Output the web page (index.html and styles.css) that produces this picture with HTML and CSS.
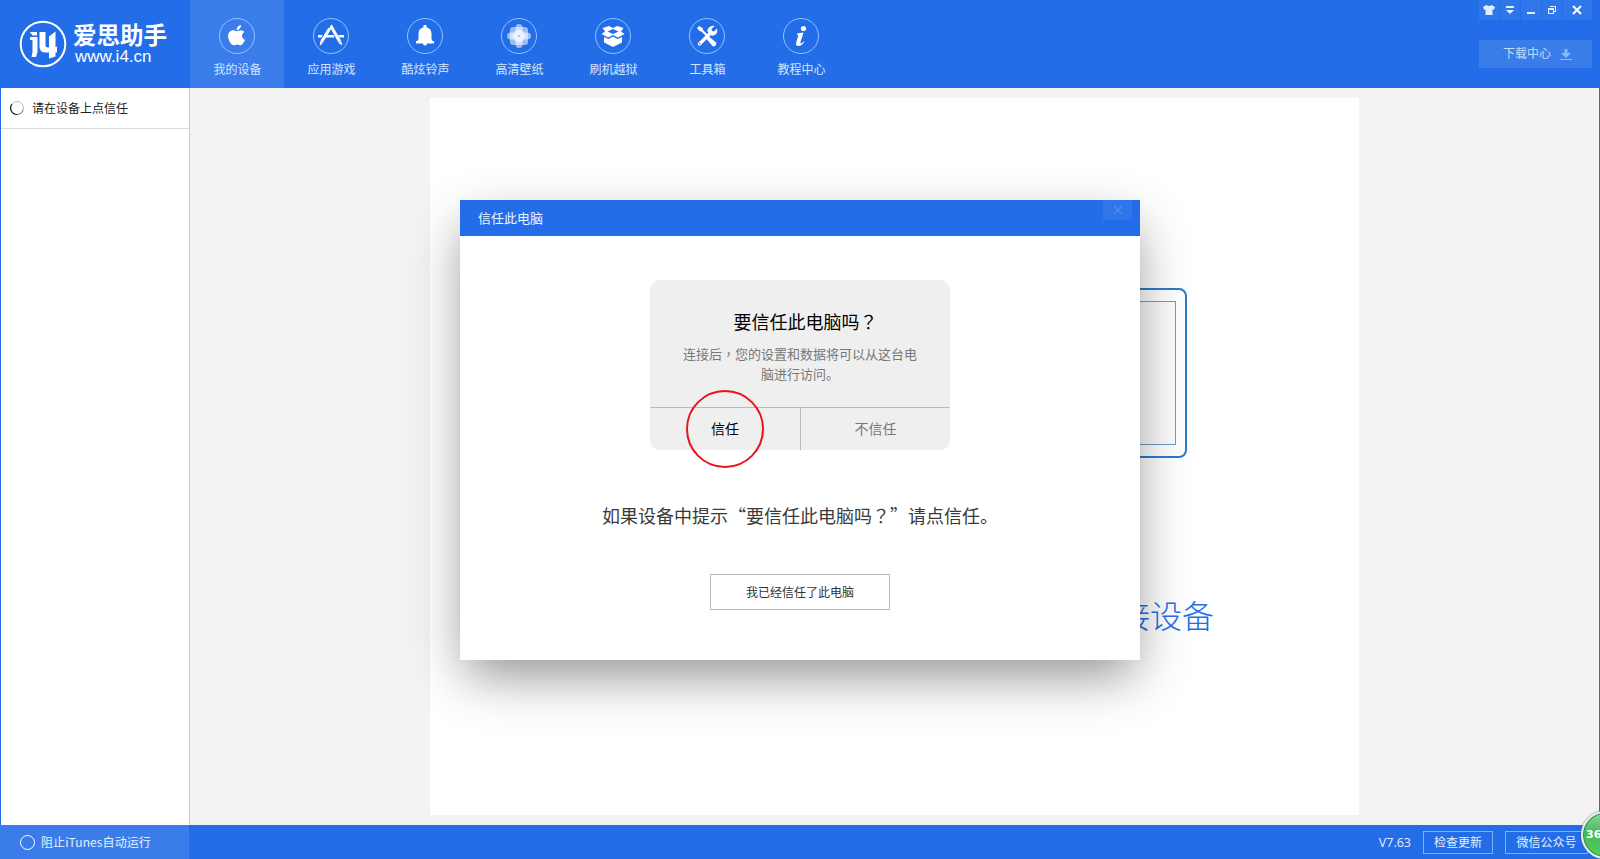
FILE: index.html
```html
<!DOCTYPE html>
<html lang="zh-CN">
<head>
  <meta charset="UTF-8" />
  <meta name="viewport" content="width=device-width, initial-scale=1.0"/>
  <title>爱思助手</title>
  <link rel="stylesheet" href="styles.css">
</head>
<body>

  <!-- Top bar -->
  <header class="header">
    <div class="logo">
      <svg width="48" height="48" viewBox="0 0 48 48" fill="#fff">
        <circle cx="24" cy="24" r="22.3" fill="none" stroke="#fff" stroke-width="2"/>
        <path d="M11 12h7v3.500h-4.500zM11 17h7.500v15l-1.500 5h-4.500l1-4.500V20H11z"/>
        <path d="M20.500 12h6v13.500q0 2 2.500 2h1v-11l6.500-5v15.500l1.500-.5v6h-1.500v4l-6.500 2v-6h-3.500q-6 0-6-6z"/>
      </svg>
      <div class="logo-text">
        <div class="logo-name">爱思助手</div>
        <div class="logo-url">www.i4.cn</div>
      </div>
    </div>

    <nav class="nav">
      <div class="nav-item active">
        <svg class="nav-icon" viewBox="0 0 36 36">
          <circle class="ring" cx="18" cy="18" r="17.500"/>
          <path d="M22 7q.2 2-1.200 3.500T17.700 12q-.2-2 1.200-3.500T22 7zM18 13.200c1-.1 2-1 3.800-1 1.500 0 2.700.7 3.500 1.800-3.500 2.200-2.700 6.500.7 7.800-.8 2.300-2.500 5.400-4.300 5.400-1.300 0-1.900-.8-3.500-.8s-2.300.8-3.500.8c-2.500 0-5.600-5-5.600-9 0-3.700 2.300-5.900 5-5.900 1.700 0 3 .9 3.900.9z"/>
        </svg>
        <span>我的设备</span>
      </div>
      <div class="nav-item">
        <svg class="nav-icon" viewBox="0 0 36 36">
          <circle class="ring" cx="18" cy="18" r="17.500"/>
          <path d="M5 17h4.500l-1 2.500H5zM12.500 17h8l1 2.500H11.500zM25 17h6v2.500h-4.700z"/>
          <path class="line" d="M16.600 10.500L8.500 24M18.200 8.500l8.500 15" stroke-width="3"/>
          <path d="M7 23.500l2.800 1.600-2.900 2.600zM25.200 24.700l3-1.800 1.200 4.600z"/>
          <path d="M19 7l-4.500 7.500" class="line" stroke-width="1.500"/>
        </svg>
        <span>应用游戏</span>
      </div>
      <div class="nav-item">
        <svg class="nav-icon" viewBox="0 0 36 36">
          <circle class="ring" cx="18" cy="18" r="17.500"/>
          <path d="M16.500 7h3v2.200q5 1.300 5 6.800v5l1 2h1.500v2.500H20a2 2 0 0 1-4 0H9V23h1.500l1-2v-5q0-5.500 5-6.800z"/>
        </svg>
        <span>酷炫铃声</span>
      </div>
      <div class="nav-item">
        <svg class="nav-icon" viewBox="0 0 36 36">
          <circle class="ring" cx="18" cy="18" r="17.500"/>
          <g opacity=".55">
            <rect x="14.500" y="6" width="7" height="12" rx="3.500"/>
            <rect x="14.500" y="18" width="7" height="12" rx="3.500"/>
            <rect x="6" y="14.500" width="12" height="7" rx="3.500"/>
            <rect x="18" y="14.500" width="12" height="7" rx="3.500"/>
          </g>
          <rect x="9" y="9" width="18" height="18" rx="3" opacity=".55"/>
          <circle cx="18" cy="18" r="6" opacity=".6"/>
          <circle cx="18" cy="18" r="1" fill="#8fb5f5"/>
        </svg>
        <span>高清壁纸</span>
      </div>
      <div class="nav-item">
        <svg class="nav-icon" viewBox="0 0 36 36">
          <circle class="ring" cx="18" cy="18" r="17.500"/>
          <path d="M7.500 10l6.500-2 4 2 4-2 6.500 2-2.500 3.500 3.500 2.500-6.500 3.500L18 17l-5 2.500L6.500 16l3.500-2.500zM18 11l-5.500 2.500L18 16l5.500-2.500z" fill-rule="evenodd"/>
          <path d="M9 19l4.500 2L18 18.500l4.500 2.500L27 19v5.500L18 29l-9-4.500z"/>
        </svg>
        <span>刷机越狱</span>
      </div>
      <div class="nav-item">
        <svg class="nav-icon" viewBox="0 0 36 36">
          <circle class="ring" cx="18" cy="18" r="17.500"/>
          <path d="M8 10l2-2 3.500 2 .5 2 5 5-1.500 1.500-5-5-2-.5z"/>
          <path d="M20 18.500l7 6q1 1.500-.5 3t-3 .5l-6-7z"/>
          <path class="line" d="M10.500 26l11.500-11.500" stroke-width="3.400" stroke-linecap="round"/>
          <path d="M25.500 8l-3 3 .5 2 2 .5 3-3q1 4-1.500 6t-5 .5l-2.500-2.500Q17.500 12 20 9.500T25.500 8z"/>
          <circle cx="10.800" cy="25.700" r=".8" fill="#236ee8"/>
        </svg>
        <span>工具箱</span>
      </div>
      <div class="nav-item">
        <svg class="nav-icon" viewBox="0 0 36 36">
          <circle class="ring" cx="18" cy="18" r="17.500"/>
          <circle cx="20.500" cy="10.500" r="2.600"/>
          <path d="M14 15.500l6.500-1-3 9.500q-.5 2 .6 1.500t2.200-2l.8.500q-2.500 4-5.600 4-3.300 0-2.300-3.500l2-6.500q.5-1.500-1.400-1.500z"/>
        </svg>
        <span>教程中心</span>
      </div>
    </nav>

    <div class="header-right">
      <div class="win-btns">
        <span class="win-btn"><svg width="12" height="10" viewBox="0 0 12 10"><path d="M3.500 0q2.500 2 5 0L12 2l-1.300 3-1.200-.5V10h-7V4.500L1.300 5 0 2z"/></svg></span>
        <span class="win-btn"><svg width="8" height="8" viewBox="0 0 8 8"><path d="M0 0h8v2H0zM0 4h8L4 8z"/></svg></span>
        <span class="win-btn low"><svg width="8" height="2" viewBox="0 0 8 2"><path d="M0 0h8v2H0z"/></svg></span>
        <span class="win-btn"><svg width="8" height="8" viewBox="0 0 8 8"><path d="M2 0h6v6H6V5h1V1H2zM0 2h6v6H0zM1 4v3h4V4z" fill-rule="evenodd"/></svg></span>
        <span class="win-btn wide"><svg width="10" height="10" viewBox="0 0 10 10"><path class="line" d="M1 1l8 8M9 1L1 9" stroke-width="2"/></svg></span>
      </div>
      <div class="download">
        <span>下载中心</span>
        <svg width="12" height="11" viewBox="0 0 12 11"><path d="M4.500 0h3v4H11L6 9 1 4h3.500zM0 10h12v1H0z"/></svg>
      </div>
    </div>
  </header>

  <!-- Sidebar + content -->
  <main class="main">
    <aside class="sidebar">
      <div class="device-row">
        <svg width="16" height="16" viewBox="0 0 16 16" fill="none">
          <circle cx="8" cy="8" r="6.500" stroke="#bbb"/>
          <path d="M3 4a6.500 6.500 0 0 0 5 10.500" stroke="#222" stroke-width="1.200"/>
          <path d="M8 14.500A6.500 6.500 0 0 0 14 10" stroke="#777"/>
        </svg>
        <span>请在设备上点信任</span>
      </div>
    </aside>
    <section class="content">
      <div class="panel">
        <div class="device-art"><div class="device-screen"></div></div>
        <div class="connect-text">接设备</div>
      </div>
    </section>
  </main>

  <!-- Bottom bar -->
  <footer class="footer">
    <div class="itunes"><span class="radio"></span><span class="itunes-text">阻止iTunes自动运行</span></div>
    <div class="footer-right">
      <span class="version">V7.63</span>
      <span class="footer-btn">检查更新</span>
      <span class="footer-btn wechat">微信公众号</span>
    </div>
  </footer>

  <div class="ball">36</div>

  <!-- Trust dialog -->
  <div class="modal">
    <div class="modal-header">
      <span>信任此电脑</span>
      <span class="modal-close"><svg width="10" height="10" viewBox="0 0 10 10"><path d="M1 1l8 8M9 1L1 9" stroke="#4d88ee" stroke-width="1.500"/></svg></span>
    </div>
    <div class="modal-body">
      <div class="trust-card">
        <div class="trust-info">
          <div class="trust-title">要信任此电脑吗<span class="mid" lang="zh-TW">？</span></div>
          <div class="trust-desc">连接后<span class="mid" lang="zh-TW">，</span>您的设置和数据将可以从这台电<br>脑进行访问。</div>
        </div>
        <div class="trust-btns">
          <div class="trust-yes">信任<span class="red-circle"></span></div>
          <div class="trust-no">不信任</div>
        </div>
      </div>
      <div class="tip">如果设备中提示“要信任此电脑吗<span class="mid" lang="zh-TW">？</span>”请点信任。</div>
      <button class="btn">我已经信任了此电脑</button>
    </div>
  </div>

</body>
</html>
```
FILE: styles.css
```css
* {
  box-sizing: border-box;
}

body {
  margin: 0;
  width: 100%;
  height: 100vh;
  display: flex;
  flex-direction: column;
  overflow: hidden;
  position: relative;
  font-family: "Noto Sans CJK SC", "Open Sans", sans-serif;
  font-size: 12px;
  font-weight: 400;
  color: #222;
  background-color: #f3f3f3;
}

svg {
  display: block;
}

.line {
  fill: none;
  stroke: #fff;
}

/* Top bar */
.header {
  height: 88px;
  flex-shrink: 0;
  display: flex;
  background-color: #236ee8;
  color: #fff;
}

.logo {
  width: 190px;
  padding: 20px 0 0 19px;
  display: flex;
  gap: 6px;
}

.logo-name {
  height: 28px;
  font-size: 23.5px;
  line-height: 28px;
  font-weight: 700;
}

.logo-url {
  padding-left: 2px;
  font-family: "Liberation Sans", Arial, sans-serif;
  font-size: 17px;
  font-weight: 400;
  line-height: 18px;
}

.nav {
  display: flex;
  flex: 1;
}

.nav-item {
  width: 94px;
  padding: 18px 0 0;
  display: flex;
  flex-direction: column;
  align-items: center;
  gap: 6px;
  color: #d3e6ff;
}

.nav-item span {
  line-height: 18px;
  padding-left: 1px;
}

.nav-item.active {
  background-color: #3a7dea;
}

.nav-icon {
  width: 36px;
  height: 36px;
  fill: #fff;
}

.ring {
  fill: none;
  stroke: #90c4fb;
}

.header-right {
  width: 121px;
  padding-right: 8px;
  fill: #e0efff;
}

.win-btns {
  display: flex;
  gap: 1px;
  height: 20px;
}

.win-btn {
  width: 20px;
  background-color: #2f76ea;
  display: flex;
  align-items: center;
  justify-content: center;
}

.win-btn.low {
  padding-top: 6px;
}

.win-btn.wide {
  width: 29px;
  padding-right: 1px;
}

.download {
  margin-top: 20px;
  height: 28px;
  padding-right: 20px;
  display: flex;
  align-items: center;
  justify-content: flex-end;
  gap: 9px;
  line-height: 18px;
  background-color: #3a7dea;
  color: #c2dbff;
  fill: #8ab8f8;
}

.download span {
  padding-bottom: 2px;
}

/* Middle */
.main {
  flex: 1;
  display: flex;
  border-left: 1px solid #236ee8;
  border-right: 1px solid #236ee8;
}

.sidebar {
  width: 189px;
  background-color: #fff;
  border-right: 1px solid #ccc;
}

.device-row {
  height: 41px;
  padding-left: 8px;
  display: flex;
  align-items: center;
  gap: 7px;
  border-bottom: 1px solid #ddd;
}

.device-row span {
  padding-bottom: 2px;
}

.content {
  flex: 1;
  padding: 10px 0;
  display: flex;
  justify-content: center;
}

.panel {
  width: 929px;
  padding-top: 190px;
  display: flex;
  flex-direction: column;
  align-items: center;
  background-color: #fff;
}

.device-art {
  width: 585px;
  height: 170px;
  padding: 11px 9px;
  border: 2px solid #2d7bc9;
  border-radius: 8px;
}

.device-screen {
  height: 100%;
  border: 1px solid #6c9dc9;
  background-color: #fdfcfc;
}

.connect-text {
  width: 639px;
  margin-top: 132px;
  font-size: 32px;
  font-weight: 300;
  line-height: 48px;
  text-align: right;
  color: #236ee8;
}

/* Bottom bar */
.footer {
  height: 34px;
  flex-shrink: 0;
  display: flex;
  justify-content: space-between;
  background-color: #236ee8;
  color: #e4f0ff;
}

.itunes {
  width: 189px;
  padding-left: 20px;
  display: flex;
  align-items: center;
  gap: 6px;
  background-color: #3a7dea;
}

.itunes-text {
  padding-bottom: 2px;
  letter-spacing: 0.1px;
}

.radio {
  width: 15px;
  height: 15px;
  border: 1px solid #fff;
  border-radius: 50%;
}

.footer-right {
  display: flex;
  align-items: center;
  gap: 12px;
  padding-right: 12px;
}

.version {
  padding-top: 1px;
  font-family: "Open Sans", sans-serif;
  font-size: 12.5px;
}

.footer-btn {
  width: 70px;
  height: 23px;
  line-height: 20px;
  text-align: center;
  border: 1px solid #7fb0f7;
}

.wechat {
  width: 83px;
}

/* Green floating ball */
.ball {
  position: absolute;
  left: 1581px;
  top: 811px;
  width: 48px;
  height: 48px;
  padding-left: 3px;
  border: 2px solid #e8f0ea;
  border-radius: 50%;
  box-shadow: inset 0 0 0 1px #2b8a4a, 0 0 2px #555;
  background: linear-gradient(#8fd89a, #43b85b 45%, #56cf5f);
  font: bold 11px/44px "DejaVu Sans", sans-serif;
  color: #fff;
}

/* Trust dialog */
.modal {
  position: absolute;
  left: 460px;
  top: 200px;
  width: 680px;
  height: 460px;
  background-color: #fff;
  box-shadow: 0 20px 50px -6px rgba(0,0,0,0.45);
}

.modal-header {
  height: 36px;
  padding: 0 8px 0 18px;
  display: flex;
  justify-content: space-between;
  background-color: #236ee8;
  color: #eef5ff;
  font-size: 13px;
  line-height: 35px;
}

.modal-close {
  width: 29px;
  height: 20px;
  display: flex;
  align-items: center;
  justify-content: center;
  background-color: #3076ea;
}

.modal-body {
  padding-top: 44px;
  display: flex;
  flex-direction: column;
  align-items: center;
}

.trust-card {
  width: 300px;
  height: 170px;
  background-color: #efefef;
  border-radius: 10px;
}

.trust-info {
  height: 128px;
  padding-top: 27px;
  text-align: center;
  border-bottom: 1px solid #bbb;
}

.trust-title {
  padding-left: 11px;
  font-size: 18px;
  line-height: 28px;
  color: #000;
}

.trust-desc {
  margin-top: 9px;
  font-size: 13px;
  line-height: 20px;
  color: #777;
}

/* centered punctuation */
.mid {
  font-family: "Noto Sans CJK TC", sans-serif;
}

.trust-btns {
  height: 42px;
  display: flex;
  font-size: 14px;
  line-height: 40px;
  text-align: center;
}

.trust-yes {
  width: 151px;
  position: relative;
  border-right: 1px solid #bbb;
  color: #000;
}

.trust-no {
  flex: 1;
  color: #777;
}

.red-circle {
  position: absolute;
  left: 36px;
  top: -18px;
  width: 78px;
  height: 78px;
  border: 2px solid #e8141c;
  border-radius: 50%;
}

.tip {
  margin-top: 51px;
  font-size: 18px;
  line-height: 28px;
  color: #3a3a3a;
}

.btn {
  width: 180px;
  height: 36px;
  margin-top: 45px;
  padding: 0 0 2px;
  border: 1px solid #bbb;
  background-color: #fff;
  font-family: inherit;
  font-size: 12px;
  color: #333;
}
```
